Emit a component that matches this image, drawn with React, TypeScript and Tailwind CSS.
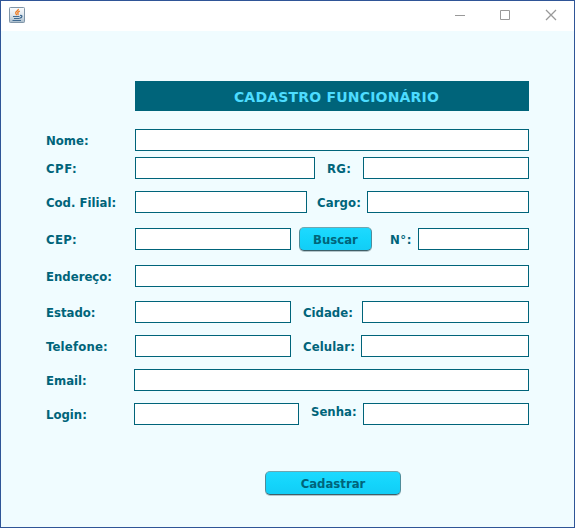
import type { ReactNode } from "react";

function Label({ className, children }: { className: string; children: ReactNode }) {
  return (
    <span className={`shrink-0 whitespace-nowrap pt-[2px] text-[13px] leading-[22px] font-bold text-[#00647a] ${className}`}>
      {children}
    </span>
  );
}

function Field({ className = "flex-1" }: { className?: string }) {
  return <input className={`block h-[22px] min-w-0 shrink-0 border border-[#00647a] bg-white px-1 text-[13px] outline-none ${className}`} />;
}

function Row({ className, children }: { className: string; children: ReactNode }) {
  return <div className={`flex h-[22px] items-center ${className}`}>{children}</div>;
}

function Button({ className, children }: { className: string; children: ReactNode }) {
  return (
    <button
      className={`h-6 shrink-0 rounded-[5px] border border-t-[#6fa6b0] border-r-[#4f8c9a] border-b-[#3f5f68] border-l-[#4f8c9a] bg-linear-to-b from-[#1ed9ff] via-[#14d5fb] to-[#12cdf6] pt-px text-[13px] leading-[22px] font-bold text-[#00647a] shadow-[0_1px_0_#b4c6cb] ${className}`}
    >
      {children}
    </button>
  );
}

function JavaIcon() {
  return (
    <svg width="16" height="16" viewBox="0 0 16 16" fill="none">
      <defs>
        <linearGradient id="tile" x1="0" y1="0" x2="0" y2="1">
          <stop offset="0" stopColor="#fbfcfd" />
          <stop offset="0.5" stopColor="#dfe7ee" />
          <stop offset="1" stopColor="#a9bccb" />
        </linearGradient>
      </defs>
      <rect x="0.5" y="0.5" width="15" height="15" rx="0.8" fill="url(#tile)" stroke="#8095a8" />
      <path d="M9.300 1.800c.5 1.800-2.900 2.500-2.600 4.200.1.900 1 1.300.9 2.200M10.800 4.200C8.700 4.900 8.400 5.800 9 6.600c.4.600.1 1-.3 1.400" stroke="#ee7b22" strokeWidth="1.300" />
      <path d="M4 9.500h6.500M5 11.500h5.500M3.500 13.500h8.500M11 8.500c2.600-.5 2.700 2-.3 2.600" stroke="#3f6a91" strokeWidth="1.200" />
    </svg>
  );
}

export default function App() {
  return (
    <div className="flex h-[528px] w-[575px] flex-col overflow-hidden border border-[#2f5597] bg-[#f0fcff] font-['DejaVu_Sans_Condensed','DejaVu_Sans',sans-serif]">
      <header className="flex h-[30px] shrink-0 items-start justify-between bg-white pl-2">
        <div className="pt-[6px]">
          <JavaIcon />
        </div>
        <svg className="mt-2 mr-[17px]" width="102" height="12" viewBox="0 0 102 12" fill="none" stroke="#999999">
          <path d="M0 6.500h10M45.500 1.500h9v9h-9z" />
          <path d="M91 1l10 10M101 1L91 11" strokeWidth="1.300" />
        </svg>
      </header>

      <main className="flex flex-col pt-[50px] pr-[45px] pl-[45px]">
        <h1 className="ml-[89px] flex h-[30px] items-center justify-center bg-[#00647a] pt-[2px] pl-[9px] font-['DejaVu_Sans',sans-serif] text-[14px] font-bold text-[#4ddcff]">
          <span className="whitespace-nowrap tracking-[0.2px]">CADASTRO FUNCIONÁRIO</span>
        </h1>

        <Row className="mt-[18px]">
          <Label className="w-[89px]">Nome:</Label>
          <Field />
        </Row>
        <Row className="mt-[6px]">
          <Label className="w-[89px] tracking-[0.5px]">CPF:</Label>
          <Field className="w-[180px]" />
          <Label className="ml-3 w-9 tracking-[0.3px]">RG:</Label>
          <Field />
        </Row>
        <Row className="mt-3">
          <Label className="w-[89px]">Cod. Filial:</Label>
          <Field className="w-[172px]" />
          <Label className="ml-[10px] w-[50px] tracking-[0.1px]">Cargo:</Label>
          <Field />
        </Row>
        <Row className="mt-[15px]">
          <Label className="w-[89px] tracking-[0.3px]">CEP:</Label>
          <Field className="w-[156px]" />
          <Button className="ml-2 w-[73px]">Buscar</Button>
          <Label className="ml-[18px] w-7 tracking-[0.500px]">N°:</Label>
          <Field />
        </Row>
        <Row className="mt-[15px]">
          <Label className="w-[89px]">Endereço:</Label>
          <Field />
        </Row>
        <Row className="mt-[14px]">
          <Label className="w-[89px]">Estado:</Label>
          <Field className="w-[156px]" />
          <Label className="ml-3 w-[59px]">Cidade:</Label>
          <Field />
        </Row>
        <Row className="mt-3">
          <Label className="w-[89px] tracking-[0.2px]">Telefone:</Label>
          <Field className="w-[156px]" />
          <Label className="ml-3 w-[58px] tracking-[0.1px]">Celular:</Label>
          <Field />
        </Row>
        <Row className="mt-3">
          <Label className="w-[88px]">Email:</Label>
          <Field />
        </Row>
        <Row className="mt-3">
          <Label className="w-[88px]">Login:</Label>
          <Field className="w-[165px]" />
          <Label className="mb-[6px] ml-3 w-[52px]">Senha:</Label>
          <Field />
        </Row>

        <Button className="mt-[46px] ml-[219px] w-[136px]">Cadastrar</Button>
      </main>
    </div>
  );
}
